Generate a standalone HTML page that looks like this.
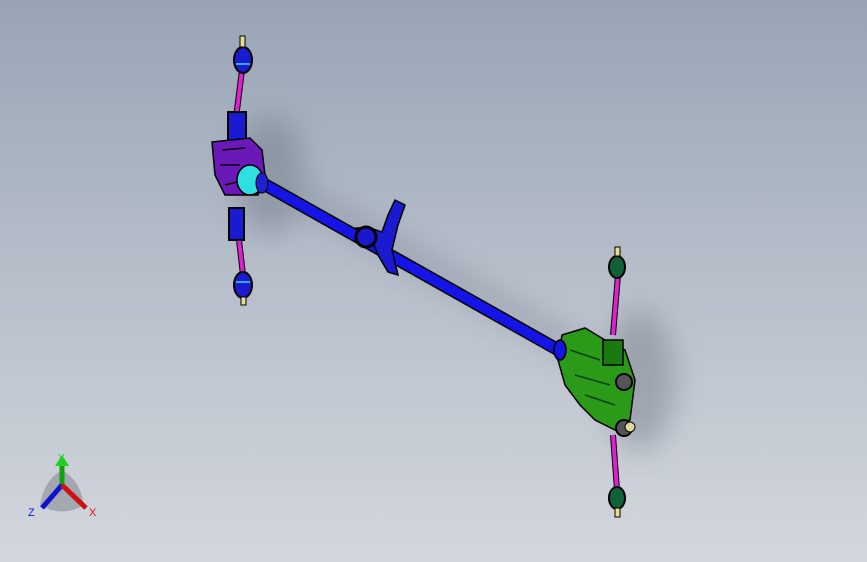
<!DOCTYPE html>
<html><head><style>
html,body{margin:0;padding:0;width:867px;height:562px;overflow:hidden}
body{background:linear-gradient(180deg,#98a4b5 0%,#b4bcc8 45%,#d3d7dd 100%)}
</style></head><body>
<svg width="867" height="562" viewBox="0 0 867 562" xmlns="http://www.w3.org/2000/svg" style="position:absolute;left:0;top:0">
<defs><filter id="b"><feGaussianBlur stdDeviation="14"/></filter></defs>
<g filter="url(#b)" opacity="0.35" fill="#5a6270">
<ellipse cx="270" cy="175" rx="35" ry="60"/>
<ellipse cx="640" cy="380" rx="35" ry="70"/>
<path d="M290 200 L580 360 L590 345 L300 185Z"/>
</g>
<!-- shaft -->
<line x1="262" y1="183" x2="562" y2="352" stroke="#000" stroke-width="13"/>
<line x1="262" y1="183" x2="562" y2="352" stroke="#1414e6" stroke-width="10"/>
<!-- middle bracket -->
<path d="M395 200 L405 205 L398 225 L392 250 L398 275 L388 272 L378 255 L372 240 L360 235 L356 228 L370 228 L382 232 L388 215Z" fill="#1a1ad0" stroke="#000" stroke-width="1.5"/>
<ellipse cx="366" cy="237" rx="10" ry="10" fill="#1818cc" stroke="#000" stroke-width="3"/>
<!-- left unit -->
<line x1="242" y1="70" x2="236" y2="118" stroke="#000" stroke-width="6"/>
<line x1="242" y1="70" x2="236" y2="118" stroke="#e020d0" stroke-width="4"/>
<line x1="239" y1="240" x2="243" y2="275" stroke="#000" stroke-width="6"/>
<line x1="239" y1="240" x2="243" y2="275" stroke="#e020d0" stroke-width="4"/>
<ellipse cx="243" cy="60" rx="9" ry="13" fill="#1a1ad0" stroke="#000" stroke-width="2"/>
<line x1="236" y1="64" x2="250" y2="64" stroke="#30e0e0" stroke-width="1.5"/>
<rect x="240" y="36" width="5" height="11" fill="#e8e090" stroke="#000"/>
<ellipse cx="243" cy="285" rx="9" ry="13" fill="#1a1ad0" stroke="#000" stroke-width="2"/>
<line x1="236" y1="282" x2="250" y2="282" stroke="#30e0e0" stroke-width="1.5"/>
<rect x="241" y="297" width="5" height="8" fill="#e8e090" stroke="#000"/>
<rect x="229" y="208" width="15" height="32" fill="#1a1ad0" stroke="#000" stroke-width="2"/>
<rect x="228" y="112" width="18" height="32" fill="#1a1ad0" stroke="#000" stroke-width="2"/>
<path d="M212 142 L250 138 L262 150 L265 175 L258 195 L225 195 L215 175Z" fill="#6a18b8" stroke="#000" stroke-width="1.5"/>
<path d="M222 150 L245 148 M220 165 L240 165 M225 185 L245 180" stroke="#000" stroke-width="1.5"/>
<ellipse cx="250" cy="180" rx="13" ry="15" fill="#30e0e0" stroke="#000" stroke-width="1.5"/>
<ellipse cx="262" cy="183" rx="6" ry="10" fill="#2020d0" stroke="#000"/>
<!-- right unit -->
<line x1="618" y1="275" x2="613" y2="335" stroke="#000" stroke-width="6"/>
<line x1="618" y1="275" x2="613" y2="335" stroke="#e020d0" stroke-width="4"/>
<line x1="613" y1="435" x2="617" y2="490" stroke="#000" stroke-width="6"/>
<line x1="613" y1="435" x2="617" y2="490" stroke="#e020d0" stroke-width="4"/>
<ellipse cx="617" cy="267" rx="8" ry="11" fill="#10603a" stroke="#000" stroke-width="2"/>
<rect x="615" y="247" width="5" height="9" fill="#e8e090" stroke="#000"/>
<ellipse cx="617" cy="498" rx="8" ry="11" fill="#10603a" stroke="#000" stroke-width="2"/>
<rect x="615" y="508" width="5" height="9" fill="#e8e090" stroke="#000"/>
<path d="M562 335 L585 328 L605 340 L625 350 L635 380 L630 420 L615 430 L595 420 L580 405 L565 385 L558 360Z" fill="#2a9a18" stroke="#000" stroke-width="1.5"/>
<path d="M570 350 L600 360 M575 375 L610 385 M585 395 L615 405" stroke="#0a400a" stroke-width="1.5"/>
<rect x="603" y="340" width="20" height="25" fill="#1a7a10" stroke="#000" stroke-width="1.5"/>
<circle cx="624" cy="382" r="8" fill="#555" stroke="#000" stroke-width="2"/>
<circle cx="624" cy="428" r="8" fill="#555" stroke="#000" stroke-width="2"/>
<circle cx="630" cy="427" r="5" fill="#e0d8a0" stroke="#000"/>
<ellipse cx="560" cy="350" rx="6" ry="10" fill="#1414e6" stroke="#000" stroke-width="1.5"/>
<!-- triad -->
<path d="M62 470 Q80 480 84 505 Q62 518 40 505 Q44 480 62 470Z" fill="#7a7e86" opacity="0.5"/>
<line x1="62" y1="485" x2="62" y2="463" stroke="#10a010" stroke-width="5"/>
<path d="M55 466 L62 455 L69 466Z" fill="#20d020"/>
<line x1="62" y1="485" x2="42" y2="508" stroke="#1010d0" stroke-width="5"/>
<line x1="62" y1="485" x2="86" y2="508" stroke="#d01010" stroke-width="5"/>
<text x="58" y="461" font-family="Liberation Sans,sans-serif" font-size="10" fill="#20d020">Y</text>
<text x="28" y="516" font-family="Liberation Sans,sans-serif" font-size="11" fill="#1010e0">Z</text>
<text x="89" y="516" font-family="Liberation Sans,sans-serif" font-size="11" fill="#e01010">X</text>
</svg>
</body></html>
